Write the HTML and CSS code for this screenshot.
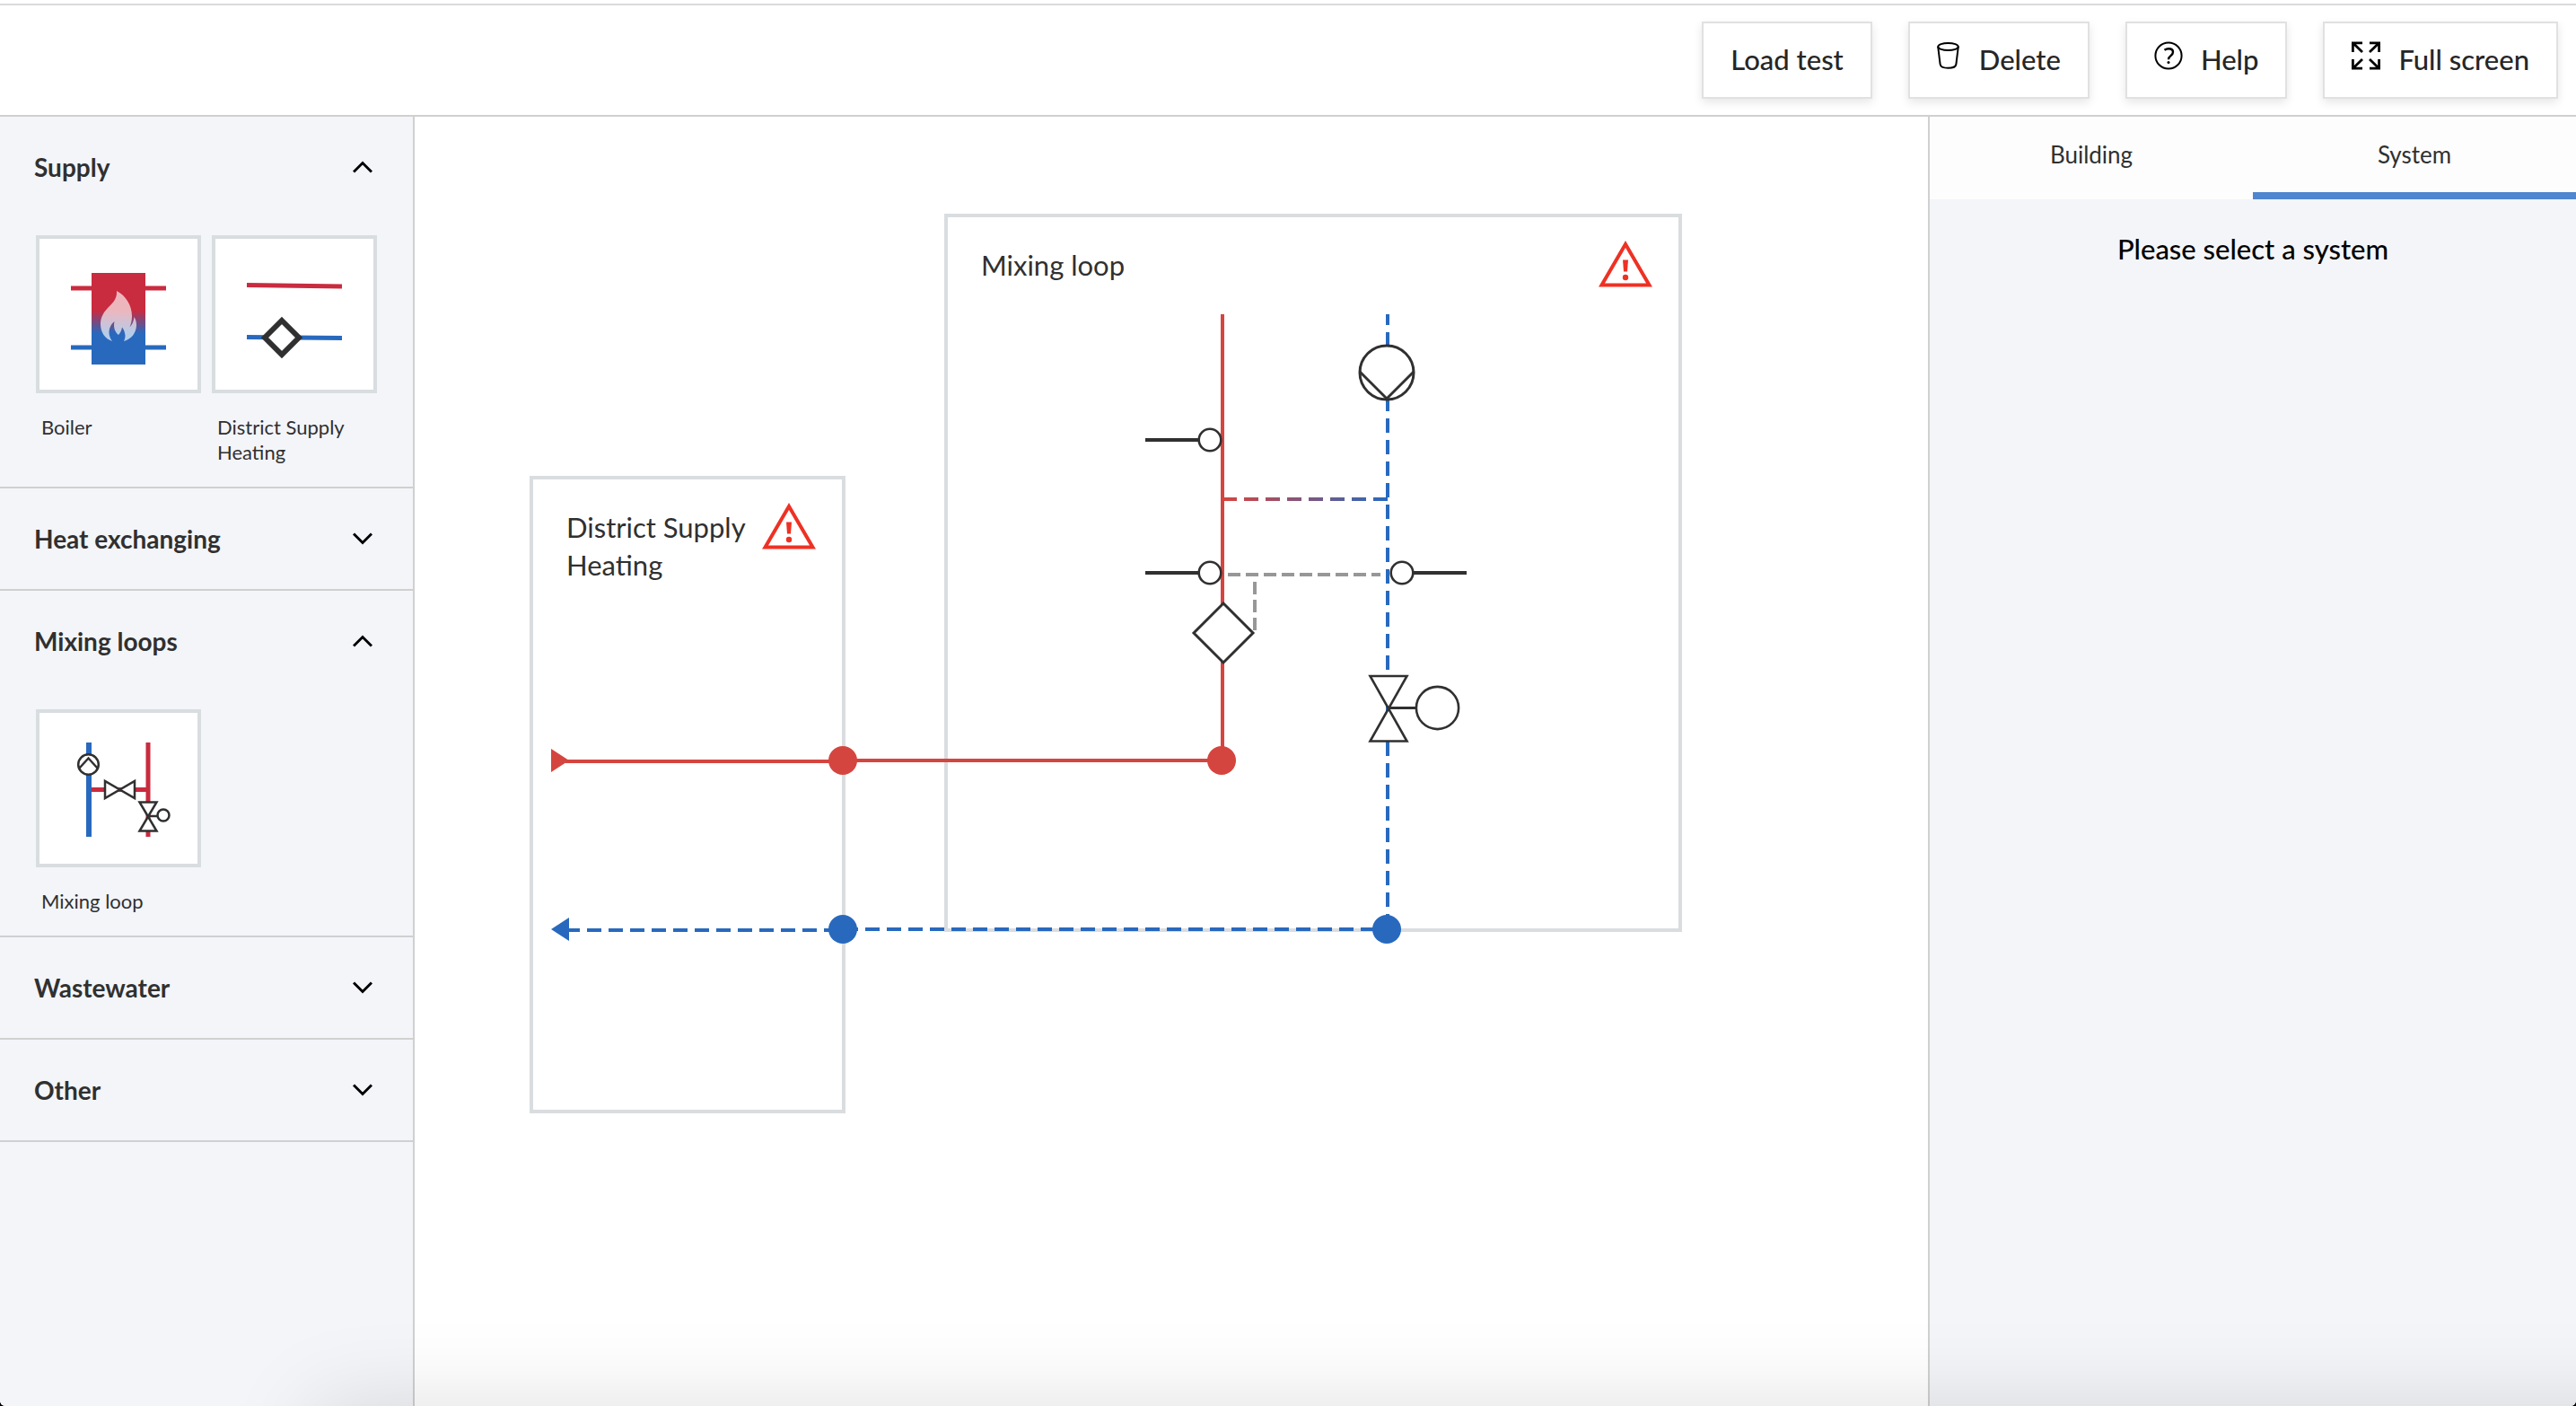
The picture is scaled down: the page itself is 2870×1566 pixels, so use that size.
FILE: index.html
```html
<!DOCTYPE html>
<html lang="en">
<head>
<meta charset="utf-8">
<meta name="viewport" content="width=device-width, initial-scale=1">
<title>System designer</title>
<link rel="stylesheet" href="styles.css">
</head>
<body>
<div class="app">
  <header class="toolbar">
    <button class="tool" type="button">Load test</button>
    <button class="tool" type="button">
      <svg class="tool-icon" width="27" height="32" viewBox="0 0 27 32" fill="none" stroke="#000" stroke-width="2" aria-hidden="true">
        <ellipse cx="12.5" cy="6" rx="11.3" ry="4"/>
        <path d="M1.2 6 3.6 25.5C4 28.500 7 29.800 12.500 29.800s8.500-1.300 8.900-4.300L23.800 6"/>
      </svg>
      Delete
    </button>
    <button class="tool" type="button">
      <svg class="tool-icon" width="32" height="32" viewBox="0 0 32 32" fill="none" stroke="#000" stroke-width="2" aria-hidden="true">
        <circle cx="16" cy="16" r="14.600"/>
        <path stroke-width="2.400" d="M11.500 9.800C13 8.700 14.500 8.200 16.200 8.200c3 0 4.800 1.500 4.800 3.900 0 4-4.900 4.100-4.900 7.700v.4"/>
        <circle cx="16" cy="23.500" r="1.500" fill="#000" stroke="none"/>
      </svg>
      Help
    </button>
    <button class="tool" type="button">
      <svg class="tool-icon" width="32" height="32" viewBox="0 0 32 32" fill="none" stroke="#000" stroke-width="2.800" aria-hidden="true">
        <path d="M1.400 12V1.800H12M1.400 1.800 12 12M20 1.800h10.600V12M30.600 1.800 20 12M1.400 20v10.200H12M1.400 30.200 12 20M20 30.200h10.600V20M30.600 30.200 20 20"/>
      </svg>
      Full screen
    </button>
  </header>

  <div class="workspace">
    <nav class="palette" aria-label="Components">
      <section class="group">
        <h2><button class="group-toggle" type="button" aria-expanded="true">Supply
          <svg width="22" height="14" viewBox="0 0 22 14" fill="none" stroke="#000" stroke-width="3" aria-hidden="true"><path d="M1 12.500 11 2.500 21 12.500"/></svg></button></h2>
        <div class="group-items">
          <button class="item" type="button">
            <svg class="thumb" viewBox="0 0 176 168" aria-hidden="true">
              <defs>
                <linearGradient id="boiler" x1="0" y1="0" x2="0" y2="1">
                  <stop offset=".41" stop-color="#c92b3f"/>
                  <stop offset=".66" stop-color="#2869be"/>
                </linearGradient>
              </defs>
              <path d="M35 55h106" stroke="#c92b3f" stroke-width="5"/>
              <path d="M35 121h106" stroke="#2869be" stroke-width="5"/>
              <path d="M58 38h60v102H58z" fill="url(#boiler)"/>
              <path fill="#fff" fill-opacity=".66" d="M86 58C96 63 103 74 103 86c0 5-1 9-2.500 12.500C103 96 105 92 105.500 87c1.500 2.500 2.500 5 2.500 9 0 9-6 16-14 18 1.500-3 2-6 1-9-.600-3-1.500-4.500-3-6.500-.500 3.500-2 6.500-4 8.500-4-3-6-9-4.500-15-4 3-6 8-6 12 0 4 1.500 7.500 3.500 10-8-2.500-13-10-13-19 0-8 4-14 9-19 5-5 9.500-9 9-18z"/>
            </svg>
            <span class="item-name">Boiler</span>
          </button>
          <button class="item" type="button">
            <svg class="thumb" viewBox="0 0 176 168" aria-hidden="true">
              <path d="M35 51.500 141 53" stroke="#c92b3f" stroke-width="5"/>
              <path d="M35 109.500 141 110.500" stroke="#2869be" stroke-width="5"/>
              <path d="M74 91 93 110 74 129 55 110z" fill="#fff" stroke="#303030" stroke-width="6"/>
            </svg>
            <span class="item-name">District Supply Heating</span>
          </button>
        </div>
      </section>

      <section class="group">
        <h2><button class="group-toggle" type="button" aria-expanded="false">Heat exchanging
          <svg width="22" height="14" viewBox="0 0 22 14" fill="none" stroke="#000" stroke-width="3" aria-hidden="true"><path d="M1 1.500 11 11.500 21 1.500"/></svg></button></h2>
      </section>

      <section class="group">
        <h2><button class="group-toggle" type="button" aria-expanded="true">Mixing loops
          <svg width="22" height="14" viewBox="0 0 22 14" fill="none" stroke="#000" stroke-width="3" aria-hidden="true"><path d="M1 12.500 11 2.500 21 12.500"/></svg></button></h2>
        <div class="group-items">
          <button class="item" type="button">
            <svg class="thumb" viewBox="0 0 176 168" aria-hidden="true">
              <path d="M57 85.500h64M121 33v105" stroke="#c92b3f" stroke-width="5" fill="none"/>
              <path d="M55 33v105" stroke="#2869be" stroke-width="6"/>
              <g fill="#fff" stroke="#303030" stroke-width="2.500">
                <circle cx="54.500" cy="57.500" r="11.300"/>
                <path fill="none" d="M44.500 61.500 54.500 50.500 64.500 61.500"/>
                <path d="M73 76v19l33-19v19z"/>
                <path d="M111.500 99.500h19l-19 32h19z"/>
                <path d="M121 115h11"/>
                <circle cx="138" cy="114" r="6.500"/>
              </g>
            </svg>
            <span class="item-name">Mixing loop</span>
          </button>
        </div>
      </section>

      <section class="group">
        <h2><button class="group-toggle" type="button" aria-expanded="false">Wastewater
          <svg width="22" height="14" viewBox="0 0 22 14" fill="none" stroke="#000" stroke-width="3" aria-hidden="true"><path d="M1 1.500 11 11.500 21 1.500"/></svg></button></h2>
      </section>

      <section class="group">
        <h2><button class="group-toggle" type="button" aria-expanded="false">Other
          <svg width="22" height="14" viewBox="0 0 22 14" fill="none" stroke="#000" stroke-width="3" aria-hidden="true"><path d="M1 1.500 11 11.500 21 1.500"/></svg></button></h2>
      </section>
    </nav>

    <main class="canvas">
      <article class="node node-supply">
        <h3 class="node-title">District Supply Heating</h3>
        <svg class="warning" width="60" height="52" viewBox="0 0 60 52" role="img" aria-label="Warning">
          <path d="M30 4 56.500 49.500h-53z" fill="none" stroke="#ee3124" stroke-width="4"/>
          <path d="M27 21.500h6l-1 13h-4z" fill="#ee3124"/><circle cx="30" cy="41" r="3.200" fill="#ee3124"/>
        </svg>
      </article>
      <article class="node node-mixing">
        <h3 class="node-title">Mixing loop</h3>
        <svg class="warning" width="60" height="52" viewBox="0 0 60 52" role="img" aria-label="Warning">
          <path d="M30 4 56.500 49.500h-53z" fill="none" stroke="#ee3124" stroke-width="4"/>
          <path d="M27 21.500h6l-1 13h-4z" fill="#ee3124"/><circle cx="30" cy="41" r="3.200" fill="#ee3124"/>
        </svg>
      </article>

      <svg class="pipes" width="1412" height="1110" viewBox="462 130 1412 1110" fill="none" stroke-width="4" aria-hidden="true">
        <defs>
          <linearGradient id="bypass" gradientUnits="userSpaceOnUse" x1="1546" y1="0" x2="1364" y2="0">
            <stop offset="0" stop-color="#2869be"/>
            <stop offset="1" stop-color="#d5453f"/>
          </linearGradient>
        </defs>
        <!-- district supply -->
        <path d="M630 848H940" stroke="#d5453f"/>
        <path d="M614 834l20 13-20 13z" fill="#d5453f"/>
        <path d="M630 1036H940" stroke="#2869be" stroke-dasharray="16 8"/>
        <path d="M634 1022l-20 13 20 13z" fill="#2869be"/>
        <!-- mixing loop -->
        <path d="M1362 350V847" stroke="#d5453f"/>
        <path d="M1546 1034V350" stroke="#2869be" stroke-dasharray="16 8"/>
        <path d="M1546 556H1364" stroke="url(#bypass)" stroke-dasharray="16 8"/>
        <path d="M1368 640H1538M1398 648V703" stroke="#979797" stroke-dasharray="14 6"/>
        <g stroke="#303030" fill="#fff">
          <path d="M1276 490h60M1276 638h60M1574 638h60"/>
          <g stroke-width="2.600">
            <circle cx="1348" cy="490" r="12.300"/>
            <circle cx="1348" cy="638" r="12.300"/>
            <circle cx="1562" cy="638" r="12.300"/>
          </g>
          <g stroke-width="3">
            <circle cx="1545" cy="415" r="30"/>
            <path d="M1515 414l30 30 30-30" fill="none"/>
            <path d="M1363 672l33 33-33 33-33-33z"/>
            <path d="M1526.500 753h41l-41 72.500h41z" stroke-width="2.600"/>
            <path d="M1547 788.500h31"/>
            <circle cx="1601.500" cy="788.500" r="23.600" stroke-width="2.600"/>
          </g>
        </g>
        <!-- connections between the two -->
        <path d="M940 847H1361" stroke="#d5453f"/>
        <path d="M940 1035H1545" stroke="#2869be" stroke-dasharray="16 8"/>
        <g fill="#d5453f"><circle cx="939" cy="847" r="16"/><circle cx="1361" cy="847" r="16"/></g>
        <g fill="#2869be"><circle cx="939" cy="1035" r="16"/><circle cx="1545" cy="1035" r="16"/></g>
      </svg>
    </main>

    <aside class="details">
      <div class="tabs" role="tablist">
        <button class="tab" type="button" role="tab" aria-selected="false">Building</button>
        <button class="tab" type="button" role="tab" aria-selected="true">System</button>
      </div>
      <p class="details-empty">Please select a system</p>
    </aside>
  </div>
  <div class="edge-shade"></div>
</div>
</body>
</html>
```
FILE: styles.css
```css
* {
  box-sizing: border-box;
}

body {
  margin: 0;
  background: #000;
  color: #303030;
  font-family: Lato, "Open Sans", sans-serif;
}

h2,
h3,
p {
  margin: 0;
}

button {
  margin: 0;
  border: 0;
  background: none;
  color: inherit;
  font: inherit;
  cursor: pointer;
}

svg {
  display: block;
  flex: none;
}

.app {
  position: relative;
  display: flex;
  flex-direction: column;
  min-height: 100vh;
  padding-top: 4px;
  overflow: hidden;
  background: #fff;
  border-radius: 0 0 6px 6px;
}

/* Toolbar */
.toolbar {
  display: flex;
  justify-content: flex-end;
  gap: 40px;
  padding: 18px 20px;
  border-top: 2px solid #dadade;
  border-bottom: 2px solid #d0d0d0;
}

.tool {
  display: flex;
  align-items: center;
  gap: 20px;
  height: 86px;
  padding: 0 30px 2px;
  border: 2px solid #e1e1e1;
  background: #fff;
  box-shadow: 0 4px 10px rgba(0, 0, 0, .1);
  color: #262626;
  font-size: 31px;
  font-weight: 500;
  line-height: 36px;
}

.tool-icon {
  margin-bottom: 8px;
}

/* Three columns under the toolbar */
.workspace {
  flex: 1;
  display: grid;
  grid-template-columns: 462px 1fr 722px;
}

/* Component palette */
.palette {
  border-right: 2px solid #d0d0d0;
  background: #f3f5f9;
}

.group {
  border-bottom: 2px solid #d0d0d0;
}

.group-toggle {
  display: flex;
  align-items: center;
  justify-content: space-between;
  width: 100%;
  height: 112px;
  padding: 0 45px 0 38px;
  font-size: 28px;
  font-weight: 700;
}

.group-items {
  display: grid;
  grid-template-columns: 184px 184px;
  gap: 12px;
  padding: 20px 40px 24px;
}

.item {
  display: flex;
  flex-direction: column;
  gap: 24px;
  padding: 0;
  text-align: left;
}

.thumb {
  width: 100%;
  border: 4px solid #d9dde0;
  background: #fff;
}

.item-name {
  padding-left: 6px;
  font-size: 22px;
  line-height: 28px;
}

/* Drawing canvas */
.canvas {
  position: relative;
}

.node {
  position: absolute;
  display: flex;
  align-items: flex-start;
  justify-content: space-between;
  padding: 26px 29px 0 37px;
  border: 4px solid #d9dde0;
  background: #fff;
}

.node-supply {
  left: 128px;
  top: 400px;
  width: 352px;
  height: 710px;
}

.node-mixing {
  left: 590px;
  top: 108px;
  width: 822px;
  height: 800px;
}

.node-title {
  padding-top: 6px;
  font-size: 31px;
  font-weight: 400;
  line-height: 42px;
}

.pipes {
  position: absolute;
  left: 0;
  top: 0;
  pointer-events: none;
}

/* Details panel */
.details {
  border-left: 2px solid #d0d0d0;
  background: #f3f5f9;
}

.tabs {
  display: grid;
  grid-template-columns: 1fr 1fr;
  background: #fdfdfd;
}

.tab {
  height: 92px;
  padding: 0;
  border-bottom: 8px solid transparent;
  font-size: 26px;
}

.tab[aria-selected="true"] {
  border-bottom-color: #4f86cf;
}

.details-empty {
  padding-top: 36px;
  color: #000;
  font-size: 31px;
  font-weight: 500;
  line-height: 38px;
  text-align: center;
}

/* Soft shade rising from the lower edge of the window */
.edge-shade {
  position: absolute;
  left: 350px;
  right: -200px;
  top: 100%;
  height: 200px;
  box-shadow: 0 0 100px rgba(0, 0, 0, .13);
  pointer-events: none;
}
```
